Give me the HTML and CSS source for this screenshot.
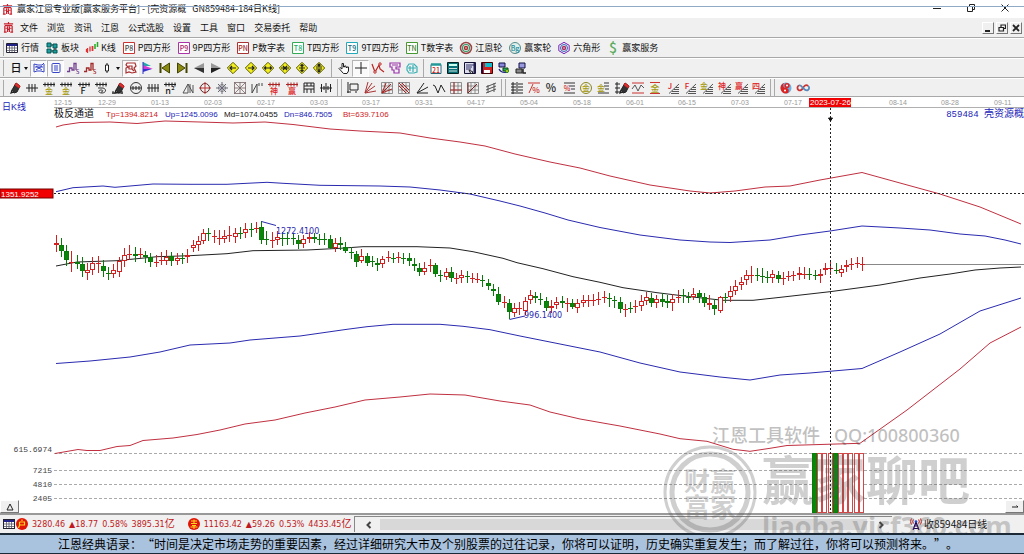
FILE: index.html
```html
<!DOCTYPE html>
<html lang="zh-CN">
<head>
<meta charset="utf-8">
<title>赢家江恩专业版</title>
<link rel="stylesheet" href="styles.css">
</head>
<body>
<header class="titlebar">
  <svg class="logo" viewBox="0 0 12 12"><path d="M1 2h10M6 0v2M2 4h8M2 4v7M5 5v6M7 5v6M10 4v7M1 11h3M8 11h3M3 7h1M5 8h2M8 7h1" stroke="#c8202c" stroke-width="1.3" fill="none"/></svg>
  <h1 class="title">赢家江恩专业版[赢家服务平台] - [壳资源概&nbsp;&nbsp; GN859484-184日K线]</h1>
  <div class="window-controls">
    <button aria-label="最小化"><svg viewBox="0 0 8 8"><path d="M0 4.5h8"/></svg></button>
    <button aria-label="还原"><svg viewBox="0 0 8 8"><path d="M.5 2.5h5v5h-5zM2.5 2V.5h5v5H6"/></svg></button>
    <button aria-label="关闭"><svg viewBox="0 0 8 8"><path d="M.5.5l7 7M7.5.5l-7 7"/></svg></button>
  </div>
</header>

<nav class="menubar">
  <svg class="logo" viewBox="0 0 12 12"><path d="M1 2h10M6 0v2M2 4h8M2 4v7M5 5v6M7 5v6M10 4v7M1 11h3M8 11h3M3 7h1M5 8h2M8 7h1" stroke="#c8202c" stroke-width="1.3" fill="none"/></svg>
  <button>文件</button><button>浏览</button><button>资讯</button><button>江恩</button><button>公式选股</button><button>设置</button><button>工具</button><button>窗口</button><button>交易委托</button><button>帮助</button>
  <div class="child-controls">
    <button aria-label="最小化子窗口"><svg viewBox="0 0 8 8"><path d="M1 7h5" stroke-width="2"/></svg></button>
    <button aria-label="还原子窗口"><svg viewBox="0 0 8 8"><path d="M1 3.5h4.5V7H1zM3 3V1h4.500v3.500H6" stroke-width="1.2"/></svg></button>
    <button aria-label="关闭子窗口"><svg viewBox="0 0 8 8"><path d="M1 1l6 6M7 1L1 7" stroke-width="1.800"/></svg></button>
  </div>
</nav>

<div class="toolbar views" id="views"></div>
<div class="toolbar" id="periods"></div>
<div class="toolbar last" id="drawing"></div>

<main class="chart">
  <svg class="plot" id="plot" viewBox="0 97 1024 416" role="img" aria-label="日K线 859484 壳资源概">
    <g id="axis"></g>
    <g class="grid">
      <path d="M54 453.500H1024M54 470.500H1024M54 484.500H1024M54 498.500H1024"/>
    </g>
    <g class="scale">
      <text x="52" y="452">615.6974</text><text x="52" y="473">7215</text><text x="52" y="487">4810</text><text x="52" y="501">2405</text>
    </g>
    <g id="volume"></g>
    <g class="bands">
      <polyline class="red" points="56,127 63,125 80,122.500 110,122 137,123.500 165,121 200,122 233,123 265,122 293,124.500 330,129 360,131 400,133 430,138 460,142 485,146 515,154 550,162 580,168 610,176 650,185 690,191 710,193 735,191 765,187 790,186 820,180 862,172.500 900,183 940,194 980,207 1021,224"/>
      <polyline class="blue" points="56,191.700 73,187.700 103,186 115,187.300 153,184 190,184.300 227,184.300 267,182.300 283,183.300 320,185.300 380,186 410,187 440,190 470,194 500,201 520,206 545,213 568,220 600,227.500 640,235 680,240 710,242 730,242.500 770,240 800,235 830,231 862,226 900,228 930,230 960,234 985,236 1005,240 1021,244"/>
      <polyline class="black" points="56,266 77,262 117,260.700 157,256.700 190,255.700 227,253.700 253,250.700 307,250 340,248.300 363,246.700 417,246.700 450,248 473,251.700 503,258.300 517,262.700 543,268.700 573,276.700 600,282.300 623,287.700 657,292.700 690,296.700 723,300.300 753,300.300 777,297.700 830,291.700 880,285 920,278 950,274 975,270 1000,268 1021,267"/>
      <polyline class="blue" points="56,363.500 90,361 130,357 160,352 190,345 230,343 250,340 300,336 347,329.300 367,326.700 393,324.300 440,324.300 463,326.300 490,329.700 520,336 560,344 600,352 640,363 680,372 720,377 750,380 780,375 810,373 862,368.500 900,352 940,334 980,311 1021,298"/>
      <polyline class="red" points="55,453.500 78,449.500 87,450.500 100,450.500 117,446.500 130,445.500 143,440.500 173,438 197,434.500 220,430 245,424 275,420 305,413 335,407 365,400 400,397 430,394 465,395 500,401 530,405 550,412 580,419 620,426 660,434 680,438.700 707,441.300 733,449.300 750,451.300 770,448.300 787,445.500 860,443.300 907,410 960,369 990,343 1021,327"/>
    </g>
    <g id="candles"></g>
    <path class="last-price" d="M865 264.500H1024"/>
    <g class="callout">
      <path d="M261.500 221.500L276 225.500M509.500 319.500L525 316"/>
      <text x="276" y="234">1272.4100</text><text x="524" y="318">996.1400</text>
    </g>
    <g class="cross">
      <path d="M54 193.500H1024M830.500 108V513"/>
      <path class="tip" d="M828.500 118h4l-2 3z"/>
    </g>
    <rect class="flag" x="0" y="189" width="53" height="9"/>
    <text class="flag-text" x="1" y="197">1351.9252</text>
    <text class="name" x="2" y="110">日K线</text>
    <g class="legend">
      <text class="caption" x="54" y="117">极反通道</text>
      <text class="red" x="106" y="117">Tp=1394.8214</text>
      <text class="blue" x="165" y="117">Up=1245.0096</text>
      <text x="224" y="117">Md=1074.0455</text>
      <text class="blue" x="284" y="117">Dn=846.7505</text>
      <text class="red" x="343" y="117">Bt=639.7106</text>
      <text class="symbol" x="1024" y="117">859484 <tspan class="wide">壳资源概</tspan></text>
    </g>
    <g class="watermark">
      <text class="contact" x="712" y="442">江恩工具软件</text>
      <text class="contact" x="834" y="442">QQ:100800360</text>
      <text class="brand" x="762" y="500">赢家聊吧</text>
      <text class="site" x="762" y="536">liaoba.yjcf360.com</text>
      <circle cx="710" cy="492" r="45" stroke-width="3"/>
      <circle cx="710" cy="492" r="38" stroke-width="5"/>
      <text class="seal" x="684" y="491">财赢</text><text class="seal" x="684" y="517">富家</text>
    </g>
  </svg>
  <button class="corner left" aria-label="展开"><svg viewBox="0 0 8 8"><path d="M1 7L4 1l3 6z"/></svg></button>
  <button class="corner right" aria-label="移动"><svg viewBox="0 0 8 8"><path d="M1 4h6M5.500 2.500L7 4"/></svg></button>
</main>

<footer class="status">
  <div class="quotes">
    <svg class="sheet" viewBox="0 0 12 12"><rect x=".5" y="1.500" width="11" height="9" fill="#fff" stroke="#223"/><path d="M1 3h10" stroke="#228" stroke-width="2"/><path d="M1 6h10M1 8.500h10M3.500 4v6M6 4v6M8.500 4v6" stroke="#556" stroke-width=".8"/></svg>
    <svg class="badge" viewBox="0 0 12 12"><circle cx="6" cy="6" r="6" fill="#e01408"/><path d="M6 1.500v1.500M3.500 4h5v3h-5M3.500 4v3.500l-1 2.500" stroke="#ffd820" stroke-width="1.200" fill="none"/></svg>
    <div class="index"><span>3280.46</span><span>▲18.77</span><span>0.58%</span><span>3895.31<i>亿</i></span></div>
    <svg class="badge" viewBox="0 0 12 12"><circle cx="6" cy="6" r="6" fill="#e01408"/><path d="M3 3h6M6 1.500V5M3 5.500h6M4 7.500h4M2.500 9h7M6 7.500V11" stroke="#ffd820" fill="none"/></svg>
    <div class="index"><span>11163.42</span><span>▲59.26</span><span>0.53%</span><span>4433.45<i>亿</i></span></div>
  </div>
  <div class="scroll">
    <button aria-label="向左"><svg viewBox="0 0 8 8"><path d="M5.500 1L2.500 4l3 3"/></svg></button>
    <div class="track"></div>
    <button aria-label="向右"><svg viewBox="0 0 8 8"><path d="M2.500 1l3 3-3 3"/></svg></button>
  </div>
  <div class="feed">
    <svg viewBox="0 0 12 12"><path d="M6 4L3 12M6 4l3 8M4.500 8h3M3.500 10.500h5M5 6h2" stroke="#205" stroke-width="1.200" fill="none"/><path d="M3.500 1.500a3 3 0 0 0 0 4M1.500.5a5 5 0 0 0 0 6M8.500 1.500a3 3 0 0 1 0 4M10.500.5a5 5 0 0 1 0 6" stroke="#d22" fill="none"/><circle cx="6" cy="3.500" r="1.300" fill="#24c"/></svg>
    <span>收859484日线</span>
  </div>
</footer>
<p class="motto">江恩经典语录：“时间是决定市场走势的重要因素，经过详细研究大市及个别股票的过往记录，你将可以证明，历史确实重复发生；而了解过往，你将可以预测将来。”。</p>
<script src="app.js"></script>
</body>
</html>
```

FILE: styles.css
```css
* { box-sizing: border-box; }
body {
  margin: 0;
  min-height: 100vh;
  display: flex;
  flex-direction: column;
  background: #fff;
  color: #111;
  font: 9px/12px "Noto Sans CJK SC", sans-serif;
  overflow-x: hidden;
}
button {
  margin: 0;
  padding: 0;
  border: 0;
  background: none;
  color: inherit;
  font: inherit;
  white-space: nowrap;
}
svg { display: block; flex: none; }

.titlebar {
  position: relative;
  display: flex;
  align-items: center;
  gap: 4px;
  height: 18px;
  padding: 0 15px 0 2px;
}
.titlebar::after {
  content: "";
  position: absolute;
  inset: 0 0 auto;
  height: 6px;
  border-bottom: 1px solid #8fa9c6;
}
.logo { width: 11px; height: 11px; }
.title { margin: 0; font-size: 9px; font-weight: 400; }
.window-controls { display: flex; gap: 26px; margin-left: auto; }
.window-controls svg, .child-controls svg { width: 8px; height: 8px; fill: none; stroke: #222; }
.window-controls svg { margin-bottom: 2px; }

.menubar {
  display: flex;
  align-items: center;
  gap: 9px;
  height: 20px;
  padding: 0 2px 0 3px;
  background: #f0f0f0;
  border-bottom: 1px solid #a8a8a8;
}
.menubar .logo { margin-right: -3px; }
.child-controls { display: flex; gap: 2px; margin-left: auto; }
.child-controls button {
  display: grid;
  place-items: center;
  width: 12px;
  height: 12px;
  border: 1px solid #fff;
  border-right-color: #777;
  border-bottom-color: #777;
}

.toolbar {
  display: flex;
  align-items: center;
  height: 20px;
  padding-left: 5px;
  background: #f0f0f0;
  border-top: 1px solid #fff;
  border-bottom: 1px solid #a8a8a8;
}
.toolbar::before { content: ""; width: 1px; height: 16px; margin-left: -2px; margin-right: 2px; background: #aaa; }
.toolbar.last { height: 19px; }
.views { gap: 7px; }
.views::before { margin-right: -5px; }
.views button { display: flex; align-items: center; gap: 3px; }
.views svg, .tool svg { width: 12px; height: 12px; overflow: visible; }
.group { display: flex; justify-content: space-between; }
.w-155 { width: 155px; }
.w-172 { width: 172px; }
.w-260 { width: 260px; }
.w-329 { width: 329px; }
.tool { display: flex; align-items: center; justify-content: center; gap: 3px; width: 17px; height: 17px; }
.tool.wide { width: 24px; }
.tool.on { background: #fafafa; border: 1px solid #b4b4b4; border-right-color: #fff; border-bottom-color: #fff; }
.tool.wide::after { content: ""; border: 2px solid transparent; border-top: 3px solid #111; border-bottom: 0; }
.rule { width: 1px; height: 18px; margin: 0 3px; background: #aaa; }
.rule.double { width: 5px; border: solid #aaa; border-width: 0 1px; background: none; margin: 0 2px; }
.toolbar text { font-family: "Noto Sans CJK SC", sans-serif; font-weight: 500; }

.chart { position: relative; }
.plot { position: relative; z-index: 1; width: 100%; height: auto; overflow: visible; pointer-events: none; }
.plot text { font-family: "Liberation Sans", "Noto Sans CJK SC", sans-serif; font-size: 8px; }
.axis-line { stroke: #b0b0b0; fill: none; }
.plot .date { font-size: 7px; fill: #999; }
.today { fill: #f00000; }
.plot .date.current { font-size: 8px; fill: #fff; }
.grid path { stroke: #aaa; stroke-dasharray: 3 2; fill: none; }
.plot .scale text { font-family: "Liberation Mono", monospace; text-anchor: end; fill: #444; }
.bands polyline { fill: none; stroke-width: 1; }
.bands .red { stroke: #c03040; }
.bands .blue { stroke: #2a2ab0; }
.bands .black { stroke: #222; }
.up { stroke: #d42020; fill: #fff; }
.down { stroke: #0a7a0a; fill: #0a860a; }
#volume .up { stroke: #d04848; }
.last-price { stroke: #888; }
.callout path { stroke: #2a2ab0; fill: none; }
.plot .callout text { font-family: "DejaVu Sans", sans-serif; fill: #2a2ab0; }
.cross path { stroke: #222; stroke-dasharray: 2 2; fill: none; }
.cross .tip { fill: #111; stroke: #111; stroke-dasharray: none; }
.flag { fill: #f00000; stroke: #700; }
.plot .flag-text { fill: #fff; }
.plot .name { fill: #1a1ab8; font-size: 9px; }
.legend text { fill: #111; }
.plot .legend .caption { font-size: 10px; }
.plot .legend .red { fill: #d01820; }
.plot .legend .blue { fill: #1a1ab8; }
.plot .legend .symbol { font-family: "Liberation Mono", "Noto Sans CJK SC", monospace; font-size: 9px; text-anchor: end; fill: #1a1ab8; }
.symbol .wide { font-size: 10px; }
.watermark { opacity: .28; fill: #555; }
.watermark circle { fill: none; stroke: #555; }
.plot .watermark text { font-family: "Noto Sans", "Noto Sans CJK SC", sans-serif; font-weight: 700; }
.plot .watermark .contact { font-size: 18px; font-weight: 500; fill: #222; }
.plot .watermark .brand { font-size: 52px; }
.plot .watermark .site { font-size: 27px; font-family: "Open Sans", sans-serif; }
.plot .watermark .seal { font-size: 26px; }

.corner {
  position: absolute;
  z-index: 2;
  bottom: 0;
  display: grid;
  place-items: center;
  width: 19px;
  height: 13px;
  background: #f0f0f0;
  border: 1px solid #fff;
  border-right-color: #777;
  border-bottom-color: #777;
}
.corner svg { width: 8px; height: 8px; fill: none; stroke: #222; }
.left { left: 0; }
.right { right: 0; }

.status {
  display: flex;
  align-items: center;
  height: 20px;
  background: #f0f0f0;
  border-top: 2px solid #999;
}
.quotes {
  display: flex;
  align-items: center;
  width: 354px;
  padding-left: 3px;
  gap: 4px;
  overflow: hidden;
  color: #c01820;
  font-family: "DejaVu Sans", "Noto Sans CJK SC", sans-serif;
  font-size: 8px;
  white-space: nowrap;
}
.quotes svg { width: 12px; height: 12px; }
.quotes .sheet { margin-right: -3px; }
.index { display: flex; align-items: baseline; gap: 4px; flex: none; }
.index i { font-size: 10px; font-style: normal; }
.index + .badge { margin-left: 9px; }
.scroll { display: flex; align-items: center; flex: 1; height: 16px; border: 1px solid #888; border-width: 1px 0 0 1px; }
.scroll button { display: grid; place-items: center; width: 22px; height: 14px; margin-left: 3px; }
.scroll svg { width: 8px; height: 8px; fill: none; stroke: #444; stroke-width: 2; }
.track { flex: 1; height: 11px; background: #d8d8d8; }
.feed { display: flex; align-items: center; gap: 2px; width: 132px; padding-left: 18px; font-size: 10px; white-space: nowrap; }
.feed svg { width: 12px; height: 12px; }

.motto {
  position: relative;
  z-index: 2;
  margin: 0;
  padding: 0 48px 0 58px;
  min-height: 21px;
  border: solid #1c2a38;
  border-width: 2px 0 1px;
  background: #a9c3df;
  color: #000;
  font-size: 12px;
  line-height: 18px;
  text-spacing-trim: space-all;
}
```

FILE: app.js
```js
const p = (d, color = '#222', width = 1, fill = 'none') =>
  `<path d="${d}" stroke="${color}" stroke-width="${width}" fill="${fill}"/>`;
const t = (text, color, size = 7, x = 6, y = 11) =>
  `<text x="${x}" y="${y}" font-size="${size}" fill="${color}" text-anchor="middle">${text}</text>`;
const c = (r, color, width = 1, fill = 'none', x = 6, y = 6) =>
  `<circle cx="${x}" cy="${y}" r="${r}" stroke="${color}" stroke-width="${width}" fill="${fill}"/>`;
const svg = body => `<svg viewBox="0 0 12 12" aria-hidden="true">${body}</svg>`;

const box = (label, edge, ink) => p('M.5 .5h11v11H.5z', edge, 1, '#fff') + t(label, ink, 7, 6, 9);
const views = [
  ['行情', p('M.5 1.500h11v9H.5z', '#223', 1, '#fff') + p('M1 3h10', '#228', 2) + p('M1 6h10M1 8.500h10M3.500 4v6M6 4v6M8.500 4v6', '#556', .8)],
  ['板块', p('M1 1h4v4H1zM7 2h4v4H7zM1 7h4v4H1zM7 8h4v3H7z', '#055', 1, '#1aa0a0') + p('M5 3h2M9 6v2M5 9h2')],
  ['K线', p('M1.500 6v5M.5 7v3M4 4.500v5', '#d33', 1.300) + p('M6.500 4v5', '#d33', 1.800) + p('M9 2v5M11.500 0v5', '#2a2', 1.500)],
  ['P四方形', box('P8', '#c33', '#444')],
  ['9P四方形', box('P9', '#a3a', '#a26')],
  ['P数字表', box('PN', '#a33', '#a22')],
  ['T四方形', box('T8', '#3a5', '#2a6')],
  ['9T四方形', box('T9', '#2ab', '#267')],
  ['T数字表', box('TN', '#493', '#473')],
  ['江恩轮', c(5.500, '#944', 1.500) + c(3.500, '#396', 1.200) + c(1.500, '#a33', 1.500)],
  ['赢家轮', c(5.500, '#588', 1, '#dff0ea') + t('Bg', '#289', 7, 6, 9)],
  ['六角形', p('M6 .3l5.200 3v5.400l-5.200 3-5.200-3V3.300z', '#72b', 1) + c(3.500, '#36b') + c(1.500, '#a36', 1.500)],
  ['赢家服务', t('$', '#5cab5c', 14, 6, 11)]
];
document.getElementById('views').innerHTML =
  views.map(([name, art]) => `<button>${svg(art)}${name}</button>`).join('');

const arrowSign = d => p('M6 .3L11.700 6 6 11.700 .3 6z', '#5a5a00', 1, '#f2ee20') + p(d, '#222', 1.200);
const comb = 'M0 2.500h12M2 .5v4M5 .5v4M8 .5v4M11 .5v4';
const steps = color => p('M0 9.500h2.500V6H5v2h2V1.500h2V8', color, 1.300) + t('S', color, 6, 10.500, 12);
const fan = p('M4 11.500h8M5 9.500h7M7 7.500h5M9 5.500h3M2 11.500L12 2', '#444', .9);
const pen = x => `<g transform="translate(${x} 0)">` + p('M3 8l4-7 4 3-3 6-3 1z', '#222', 1, '#333') + p('M7 1l4 3-1 2-4-3z', '#c22', 1, '#d33') + p('M3 8l-1 3 3-1', '#222', 1.200) + '</g>';
const square = p('M.5 .5h11v11H.5zM4 .5v11M8 .5v11M.5 4h11M.5 8h11', '#777', .8);

const periods = [
  { size: '', items: [
    ['日线', t('日', '#111', 11, 7, 10), 'wide'],
    ['叠加', p('M1 2l4 1h4l2-2M1 2v8l3-1h4l3 1V2M2 5h8M3 8l6-4M3 4l6 4', '#3846c8'), 'on'],
    ['标注', p('M3 1.500h6a1 1 0 0 1 1 1v7a1 1 0 0 1-1 1H3a1 1 0 0 1-1-1v-7a1 1 0 0 1 1-1zM4 4h4M4 6h4M4 8h4', '#3846c8'), 'on'],
    ['转折', steps('#724090')], ['波段', steps('#a02828')],
    ['蜡烛', p('M6 1v2M6 9v2M4.500 3h3v6h-3z', '#222', 1, '#fff'), 'wide'],
    ['通道', p('M2 1h8l1 3-2 2 2 4-4 1-3-1-3 1V6l2-1-2-2zM4 4h3v3H4zM7 7l2 2', '#a83030', 1.200), 'on'],
    ['分布', p('M1 0l8 4H1z', '#28b', 0, '#2aa') + p('M1 3l10 4H1z', 'none', 0, '#d03ad0') + p('M1 7h9l-9 3z', 'none', 0, '#33c') + p('M1 0v12', '#33c')]
  ]},
  { size: 'w-172', items: [
    ['首页', p('M10.500 1v10L3 6z', '#440', 1, '#8a8a10') + p('M1.500 1v10', '#440', 2)],
    ['末页', p('M1.500 1v10L9 6z', '#440', 1, '#8a8a10') + p('M10.500 1v10', '#440', 2)],
    ['上一个', p('M11 1v10L1 6z', '#555', 0, '#999') + p('M1 6h10v5z', '#555', 0, '#333')],
    ['下一个', p('M1 1v10l10-5z', '#555', 0, '#999') + p('M1 6h10L1 11z', '#555', 0, '#222')],
    ['左移', arrowSign('M3 6h6M5 4L3 6l2 2')], ['右移', arrowSign('M3 6h6M7 4l2 2-2 2')],
    ['横向展开', arrowSign('M2.500 6h7M4 4.500L2.500 6 4 7.500M8 4.500L9.500 6 8 7.500')],
    ['横向收缩', arrowSign('M2 6h8M4 4l2 2-2 2M8 4L6 6l2 2')],
    ['纵向展开', arrowSign('M6 2v8M4.500 4L6 2.500 7.500 4M4.500 8L6 9.500 7.500 8M3 6h6')],
    ['纵向收缩', arrowSign('M6 2v3M6 10V7M4.500 3.500L6 2l1.500 1.500M4.500 8.500L6 10l1.500-1.500M3 5h6M3 7h6')]
  ]},
  { size: '', rule: 'rule', items: [
    ['拖动', p('M4 7V1.500h1.500V5h1V4H8v1.500h1V5h1.500v4L9 11.500H5.500L1 6.500l1-1z', '#222', 1, '#fff')],
    ['十字线', p('M6 0v12M0 6h12', '#222'), 'on'],
    ['折线', p('M0 2l3 8 4-7 1 4 4 3', '#b22', 1.200) + c(1.200, '#b22', 1, '#fff', 3, 10) + c(1.200, '#b22', 1, '#fff', 8, 2)],
    ['神奇', p('M1 1h10v4H7v2h3v4H5V8H3V5H1zM3 3h6', '#93a', 1.200)],
    ['云图', p('M3 2h5l3 3v5l-3 1H3L1 8V5zM4 4v5M7 3v7M2 6h8', '#3ab0b4', 1.200)]
  ]},
  { size: '', rule: 'rule', items: [
    ['日历', p('M1 2.500h10v9H1z', '#267', 1, '#fff') + p('M1 2.500h10', '#299', 2.500) + t('21', '#c22', 7, 6, 10.500)],
    ['计算器', p('M.5 .5h11v11H.5z', '#022', 1, '#0a7078') + p('M2 3h8', '#cfe', 2) + p('M2 6.500h8M2 9h8', '#cdd', 1.200)],
    ['报告', p('M.5 .5h11v11H.5z', '#113', 1, '#dde') + p('M2 3h8M2 5h6M2 7h5', '#336', 1.200) + p('M10.500 1v10', '#225', 2) + p('M5 8l4 2-2 2z', '#222')],
    ['保存', p('M.5 .5h11v11H.5z', '#400', 1, '#c22') + p('M4 1h7v4H4z', '#079', 0, '#1bc') + p('M3 8h6v3H3z', '#222', 0, '#fff') + p('M1 1v10', '#114', 2)],
    ['网络', p('M1 1h6v4H1z', '#114', 1, '#88d') + p('M5 6h5v3H5z', '#141', 1, '#2a6') + p('M1 7c2 4 5 4 9 3', '#228', 1.300) + c(1.500, '#281', 1, '#dd2', 9, 9)],
    ['连接', p('M4 1h6v5H4z', '#114', 1, '#99d') + p('M1 7h6v4H1z', '#222', 1, '#888') + p('M8 7v4h3', '#222', 1.500)]
  ]}
];

const mark = (label, color) => p('M1 .5h10M1 11.500h10', '#c33') + t(label, color, 9, 6, 9.500);
const ladder = (label, color) => fan + t(label, color, 8, 3, 7);
const drawing = [
  { size: 'w-329', items: [
    ['画笔', pen(0)], ['刻度', p('M0 6h12M3 2v8M6 2v8M9 2v8')],
    ['黄金分割', p(comb) + t('金', '#a59a10', 8, 6, 12)], ['黄金延伸', p(comb) + t('金', '#a59a10', 8, 6, 12)],
    ['斐波那契', p(comb) + t('F', '#222', 9, 5, 12)], ['螺旋', p(comb) + p('M3 6h5c4 1 3 5-1 5s-4-3-1-3 2 2 0 2', '#333')],
    ['标记', pen(1) + p('M0 11h11M1 9v3M10 9v3')], ['圆周', c(5.500, '#333') + p('M1 6h10M3 4v4M6 4v4M9 4v4')],
    ['等分', p('M0 6h12M2 2v8M5 2v8M8 2v8M11 2v8')], ['平方', p(comb) + t('n²', '#222', 9, 6, 12)],
    ['三角', p('M1 11L6 2v9zM8 2v9M6 2l5 9V3', '#555')], ['定位圆', c(4.500, '#622') + p('M0 6h12M6 0v12', '#b33')],
    ['星形', c(3.500, '#888') + p('M6 0v12M0 6h12M2 2l8 8M10 2L2 10', '#667')],
    ['方形角度', p('M.5 .5h11v11H.5zM0 0l12 12M12 0L0 12M6 0v12M0 6h12', '#766', .8)],
    ['时间', p('M1 11V2M1 11L6 2v9M8 1v3M11 1v3', '#444')],
    ['神', p(comb, '#a22') + t('神', '#d22', 8, 6, 12)], ['赢', p(comb, '#a22') + t('赢', '#d22', 8, 6, 12)],
    ['矩阵', p('M1 1h10v10M1 1v10M1 4h10M1 7h10M4 1v3M8 1v3M4 7v4M8 7v4')], ['对称', p('M0 6h12M1.500 2v8M6 1v10M10.500 2v8M4 4v4M8 4v4')]
  ]},
  { size: 'w-155', rule: 'rule double', items: [
    ['矩形', p('M3 2h8v6H3zM1 0v11M0 10h4M9 9v2')], ['射线', p('M1 11L4 0M1 11L8 1M1 11l10-7M1 11l11-2', '#a33')],
    ['方射线', square + p('M1 11L5 1M1 11l9-9M1 11l10-4', '#a22')], ['方斜线', square + p('M1 1l10 10M4 1l7 7M1 4l7 7', '#a22')],
    ['角度线', p('M1 11L8 1M1 11l11-6M1 11h11')], ['折线', p('M0 3l2 1 3 7 3-8 4 7')],
    ['网格', square + p('M4 0v12M0 8h12', '#a33')], ['网格线', square + p('M1 1v10l9-9', '#722')], ['平行线', p('M1 5l10-4M1 8l10-4M1 11l10-4M3 3v8M9 1v9', '#555')]
  ]},
  { size: 'w-260', rule: 'rule double', items: [
    ['价格刻度', p('M2 0v12M6 0v12M0 2h5M0 5h5M0 8h5M0 11h5M7 2h5M7 5h5M7 8h5M7 11h5')],
    ['趋势', p('M0 1h12M1 11L5 2', '#c33') + t('%', '#c22', 8, 8, 11)], ['百分比', t('%', '#222', 11, 6, 10)],
    ['百分线', p('M1 1h11M6 4h6M8 7h4M1 11h11', '#333') + t('%', '#c22', 7, 4, 9)],
    ['金圆', c(5.500, '#8a8520') + t('金', '#a59a10', 8, 6, 9)], ['金线', p('M7 1h5M7 4h5M8 7h4M1 11h11', '#333') + t('金', '#a59a10', 8, 4, 9)],
    ['测量', p('M2 0v12M0 2h5M0 6h5M0 10h5') + pen(3)], ['波动', p('M0 1h12M0 11h12', '#c33') + p('M0 7l3-4 3 6 3-6 3 3', '#555')],
    ['金分线', mark('金', '#a59a10')], ['J', ladder('J', '#d22')], ['F', ladder('F', '#d22')], ['金', ladder('金', '#a59a10')],
    ['神角', ladder('神', '#d22')], ['赢角', ladder('赢', '#d22')], ['四角', ladder('四', '#d22')]
  ]},
  { size: '', rule: 'rule double', items: [
    ['太极', c(5.500, '#58c', 0, '#6ab0e4') + p('M6 .5a5.500 5.500 0 0 0 0 11 2.700 2.700 0 0 0 0-5.500 2.700 2.700 0 0 1 0-5.500z', 'none', 0, '#d22') + c(2.600, 'none', 0, '#d22', 7, 3.500) + c(1, 'none', 0, '#fff', 7, 3.500) + c(1, 'none', 0, '#fff', 5, 8.500)],
    ['无限', p('M11 4C9 2 7 4 6 6S3 9 1.500 8 0 4 2 3.500', '#c33', 1.800) + p('M2 3.500C4 3 5 5 6 6s3 3.500 5 2 1-3.500 0-4', '#58b', 1.800)]
  ]}
];
const toolbar = groups => groups.map(g =>
  (g.rule ? `<span class="${g.rule}"></span>` : '') +
  `<div class="group ${g.size}">` +
  g.items.map(([name, art, kind = '']) => `<button class="tool ${kind}" aria-label="${name}">${svg(art)}</button>`).join('') +
  '</div>').join('');
document.getElementById('periods').innerHTML = toolbar(periods);
document.getElementById('drawing').innerHTML = toolbar(drawing);

const dates = [[54, '12-15'], [98, '12-29'], [151, '01-13'], [204, '02-03'], [257, '02-17'], [310, '03-03'], [362, '03-17'],
  [415, '03-31'], [467, '04-17'], [520, '05-04'], [573, '05-18'], [626, '06-01'], [678, '06-15'], [731, '07-03'], [784, '07-17'],
  [889, '08-14'], [941, '08-28'], [994, '09-11']];
document.getElementById('axis').innerHTML =
  '<path class="axis-line" d="M54 107.500H1024"/>' +
  dates.map(([x, d]) => `<text class="date" x="${x}" y="105">${d}</text>`).join('') +
  '<rect class="today" x="809" y="98" width="42" height="9"/><text class="date current" x="810" y="105">2023-07-26</text>';

// Each candle: direction, high, body top, body bottom, low; thirds of a unit below the section's top.
const sections = [
  [180, `r166 190 196 217,g175 195 212 232,g195 213 240 258,r213 245 248 275,g225 246 252 268,g230 253 272 290,r248 270 279 300,r232 250 270 285,r228 250 251 280,g240 258 273 290,g260 279 281 300,r252 270 282 295,r230 243 275 290,r205 226 242 260,r195 222 224 240,g200 222 228 245,r205 222 226 235,g212 226 232 248,g218 232 247 260,r225 245 247 262,r215 240 242 255,r210 232 242 255,g215 228 243 258,r220 233 242 255,g218 234 236 252,r208 226 232 248,r180 194 205 215,r168 182 195 212,r148 160 182 192,g143 160 163 182,r150 168 170 190,r150 175 177 195,r150 168 177 190,r138 165 167 186,r145 158 172 188,g140 158 161 178,r130 147 160 175,g128 147 149 170,r125 145 147 160,g123 142 180 193,g152 178 180 195,r155 180 182 205,r152 172 180 195,g155 175 177 198,g155 174 176 195,g158 174 176 195,g165 180 193 208,r165 178 193 205,r155 172 178 190,g160 172 178 188,g162 177 179 196,g158 176 178 195,g165 177 203 208`],
  [220, `r55 68 85 95,g52 70 74 90,g65 80 92 98,g80 95 100 118,g92 102 125 142,r88 108 122 128,g100 108 128 138,g108 124 127 142,g115 129 134 152,r108 118 132 145,r92 112 113 125,g100 113 114 130,r95 112 113 130,g98 113 114 132,g100 115 124 138,g115 131 138 152,g130 145 155 168,r125 143 155 165,r118 136 139 155,g128 136 162 172,g150 165 167 185,r145 157 170 180,g140 157 174 185,r160 174 176 193,r150 166 173 188,g152 169 171 188,r158 175 177 190,r158 176 178 190,g165 180 182 200,g178 190 197 210,g192 208 214 228,g202 222 245 255,r228 247 250 265,g238 250 275 298,r248 265 280 290,r245 265 267 285,r232 242 272 285,r210 226 240 252,g215 228 233 250,g220 236 240 255,g232 242 265 272,r240 258 264 280,r230 245 254 266,g228 243 250 265,r235 250 252 275,g238 250 262 268,r236 250 264 278,r225 240 248 262,r225 240 242 260`],
  [240, `r163 180 182 198,r155 177 179 195,r152 172 174 190,g158 175 177 200,g168 180 183 205,g172 186 208 218,r192 207 211 232,g185 204 206 220,r180 198 200 218,r165 184 198 212,r155 172 182 195,g158 174 190 202,r165 178 190 205,g160 178 186 200,g165 184 188 205,r162 178 190 212,r150 170 173 188,g148 165 167 190,g155 170 171 190,r145 162 170 180,g150 158 170 188,g160 172 188 202,r165 190 194 210,g178 194 208 225,r168 172 212 218,g158 172 174 190,r138 153 170 185,r120 138 153 165,r110 127 134 150,r90 104 120 135,r78 104 106 128,g85 104 106 122,g85 108 110 128,g92 112 114 130,r90 103 113 128,g92 105 116 130,r95 114 118 134,r92 107 109 122,r92 106 108 124,r80 100 104 120,r82 103 104 118,g85 103 104 120,g90 105 107 120,r88 102 108 128,r70 84 91 105,r65 84 86 105,g68 90 94 102,r75 88 98 112,r60 75 80 96,r55 72 75 90,r50 68 72 84,r52 72 74 92`]
];
const candles = sections.flatMap(([top, rows]) => rows.split(',').map(row => ({
  kind: row[0] === 'r' ? 'up' : 'down',
  y: row.slice(1).split(' ').map(v => Math.round(top + v / 3))
})));
const pitch = (862.5 - 56) / (candles.length - 1);
document.getElementById('candles').innerHTML = candles.map(({ kind, y: [high, top, bottom, low] }, i) => {
  const x = Math.round(56 + i * pitch - 0.5) + 0.5;
  const body = bottom - top < 2
    ? `<path d="M${x - 2.5} ${top + 0.5}h5"/>`
    : `<rect x="${x - 2}" y="${top + 0.5}" width="4" height="${bottom - top - 1}"/>`;
  return `<g class="${kind}"><path d="M${x} ${high}V${low}"/>${body}</g>`;
}).join('');

document.getElementById('volume').innerHTML = [...'grrrgrrrrr'].map((k, i) =>
  `<rect class="${k === 'r' ? 'up' : 'down'}" x="${Math.round(812 + i * 5.2) + 0.5}" y="453.500" width="4" height="59"/>`).join('');
```
